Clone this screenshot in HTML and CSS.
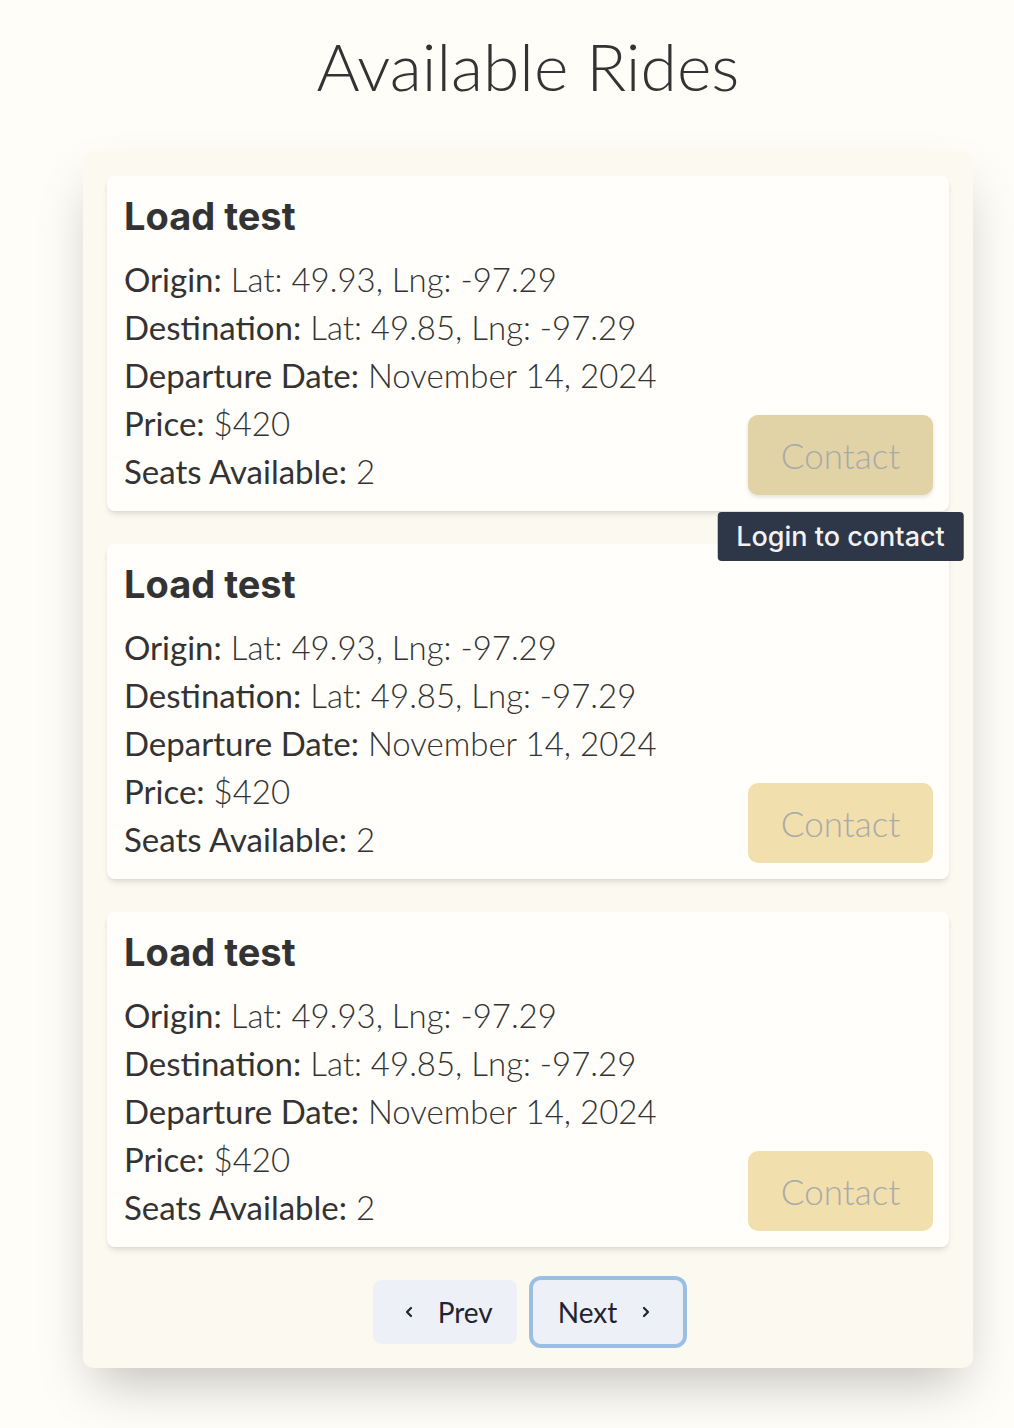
FILE: index.html
```html
<!DOCTYPE html>
<html lang="en">
<head>
<meta charset="utf-8">
<title>Available Rides</title>
<link rel="stylesheet" href="styles.css">
</head>
<body>
<main class="page">
  <h1 class="page-title">Available Rides</h1>
  <section class="rides">
    <article class="ride-card">
      <h2 class="ride-name">Load test</h2>
      <div class="ride-body">
        <ul class="ride-info">
          <li><span class="label">Origin:</span> Lat: 49.93, Lng: -97.29</li>
          <li><span class="label">Destination:</span> Lat: 49.85, Lng: -97.29</li>
          <li><span class="label">Departure Date:</span> November 14, 2024</li>
          <li><span class="label">Price:</span> $420</li>
          <li><span class="label">Seats Available:</span> 2</li>
        </ul>
        <div class="contact-wrap">
          <button class="contact-btn is-hover" disabled>Contact</button>
          <div class="tooltip">Login to contact</div>
        </div>
      </div>
    </article>
    <article class="ride-card">
      <h2 class="ride-name">Load test</h2>
      <div class="ride-body">
        <ul class="ride-info">
          <li><span class="label">Origin:</span> Lat: 49.93, Lng: -97.29</li>
          <li><span class="label">Destination:</span> Lat: 49.85, Lng: -97.29</li>
          <li><span class="label">Departure Date:</span> November 14, 2024</li>
          <li><span class="label">Price:</span> $420</li>
          <li><span class="label">Seats Available:</span> 2</li>
        </ul>
        <div class="contact-wrap">
          <button class="contact-btn" disabled>Contact</button>
        </div>
      </div>
    </article>
    <article class="ride-card">
      <h2 class="ride-name">Load test</h2>
      <div class="ride-body">
        <ul class="ride-info">
          <li><span class="label">Origin:</span> Lat: 49.93, Lng: -97.29</li>
          <li><span class="label">Destination:</span> Lat: 49.85, Lng: -97.29</li>
          <li><span class="label">Departure Date:</span> November 14, 2024</li>
          <li><span class="label">Price:</span> $420</li>
          <li><span class="label">Seats Available:</span> 2</li>
        </ul>
        <div class="contact-wrap">
          <button class="contact-btn" disabled>Contact</button>
        </div>
      </div>
    </article>
    <nav class="pager">
      <button class="pager-btn">
        <svg class="chev" viewBox="0 0 14 14" width="14" height="14"><path d="M9 3 L5 7 L9 11" fill="none" stroke="currentColor" stroke-width="2.2" stroke-linecap="round" stroke-linejoin="round"/></svg>
        <span>Prev</span>
      </button>
      <button class="pager-btn is-focus">
        <span>Next</span>
        <svg class="chev" viewBox="0 0 14 14" width="14" height="14"><path d="M5 3 L9 7 L5 11" fill="none" stroke="currentColor" stroke-width="2.2" stroke-linecap="round" stroke-linejoin="round"/></svg>
      </button>
    </nav>
  </section>
</main>
</body>
</html>
```
FILE: styles.css
```css
html, body {
  margin: 0;
  padding: 0;
}
body {
  background: #fefdf8;
  color: #333333;
  font-family: "Lato", "Open Sans", sans-serif;
}
.page {
  padding: 26px 41px 60px 83px;
}
.page-title {
  margin: 0 0 46px 0;
  text-align: center;
  font-family: "Lato", sans-serif;
  font-weight: 300;
  font-size: 66px;
  line-height: 80px;
  color: #333333;
}
.rides {
  background: #fcfaf0;
  border-radius: 10px;
  padding: 24px;
  display: flex;
  flex-direction: column;
  gap: 33px;
  box-shadow: 0 25px 50px -12px rgba(0, 0, 0, 0.25);
}
.ride-card {
  background: #fffefa;
  border-radius: 8px;
  padding: 12px 16px 16px 17px;
  box-shadow: 0 4px 6px -1px rgba(0, 0, 0, 0.1), 0 2px 4px -2px rgba(0, 0, 0, 0.1);
}
.ride-name {
  margin: 0 0 11px 0;
  font-family: "Inter", sans-serif;
  font-weight: 700;
  font-size: 38px;
  line-height: 56px;
  color: #333333;
}
.ride-body {
  display: flex;
  justify-content: space-between;
  align-items: flex-end;
}
.ride-info {
  list-style: none;
  margin: 0;
  padding: 0;
  font-weight: 300;
  font-size: 33px;
  line-height: 48px;
}
.label {
  font-weight: 400;
}
.contact-wrap {
  position: relative;
}
.contact-btn {
  display: block;
  width: 185px;
  height: 80px;
  border: none;
  border-radius: 10px;
  background: #f2dfae;
  color: #a9a9a9;
  font-family: "Lato", sans-serif;
  font-weight: 300;
  font-size: 35px;
}
.contact-btn.is-hover {
  background: #e2d3a6;
  box-shadow: 0 2px 4px rgba(0, 0, 0, 0.12);
}
.tooltip {
  position: absolute;
  top: 97px;
  left: 50%;
  transform: translateX(-50%);
  white-space: nowrap;
  background: #2d3748;
  color: #f2f2f2;
  font-family: "Inter", sans-serif;
  font-weight: 500;
  font-size: 27px;
  line-height: 49px;
  padding: 0 19px;
  border-radius: 4px;
}
.pager {
  display: flex;
  justify-content: center;
  gap: 16px;
}
.pager-btn {
  display: flex;
  align-items: center;
  gap: 22px;
  height: 64px;
  padding: 0 24px 0 29px;
  border: none;
  border-radius: 8px;
  background: #edf1f7;
  color: #1f2430;
  font-family: "Lato", sans-serif;
  font-weight: 400;
  font-size: 28px;
}
.pager-btn.is-focus {
  padding: 0 30px 0 25px;
  box-shadow: 0 0 0 4px #9bbfe3;
}
.chev {
  display: block;
}
```
